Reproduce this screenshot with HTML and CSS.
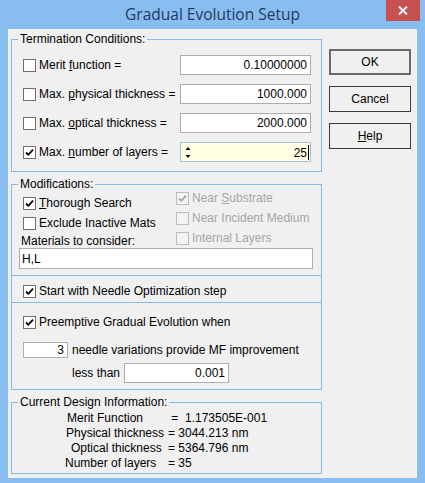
FILE: index.html
```html
<!DOCTYPE html>
<html>
<head>
<meta charset="utf-8">
<link rel="stylesheet" href="styles.css">
</head>
<body>
<div class="window">
  <div class="titlebar">
    <span class="title">Gradual Evolution Setup</span>
    <span class="close"><svg width="10" height="9" viewBox="0 0 10 9"><path d="M1 0.5 L9 8.5 M9 0.5 L1 8.5" stroke="#fff" stroke-width="1.9" fill="none"/></svg></span>
  </div>
  <div class="client">
    <div class="main">
      <div class="group term">
        <div class="legend">Termination Conditions:</div>
        <div class="term-body">
          <div class="check"><span class="cb"></span><span>Merit <u>f</u>unction =</span></div>
          <div class="edit">0.10000000</div>
          <div class="check"><span class="cb"></span><span>Max. <u>p</u>hysical thickness =</span></div>
          <div class="edit">1000.000</div>
          <div class="check"><span class="cb"></span><span>Max. <u>o</u>ptical thickness =</span></div>
          <div class="edit">2000.000</div>
          <div class="check"><span class="cb"><svg width="11" height="11" viewBox="0 0 11 11"><path d="M2 5.5 L4.3 7.8 L9 2.6" stroke="#000" stroke-width="1.8" fill="none"/></svg></span><span>Max. <u>n</u>umber of layers =</span></div>
          <div class="edit focus"><svg class="spin" width="6" height="13" viewBox="0 0 6 13"><path d="M3 1 L5.5 4 L0.5 4 Z M0.5 9 L5.5 9 L3 12 Z" fill="#000"/></svg><span>25<span class="caret"></span></span></div>
        </div>
      </div>

      <div class="group mods">
        <div class="legend">Modifications:</div>
        <div class="mods-top">
          <div class="col-left">
            <div class="check"><span class="cb"><svg width="11" height="11" viewBox="0 0 11 11"><path d="M2 5.5 L4.3 7.8 L9 2.6" stroke="#000" stroke-width="1.8" fill="none"/></svg></span><span><u>T</u>horough Search</span></div>
            <div class="check gap6"><span class="cb"></span><span>Exclude Inactive Mats</span></div>
            <div class="mat-label">Materials to consider:</div>
          </div>
          <div class="col-right">
            <div class="check disabled"><span class="cb"><svg width="11" height="11" viewBox="0 0 11 11"><path d="M2 5.5 L4.3 7.8 L9 2.6" stroke="#a3a3a3" stroke-width="1.8" fill="none"/></svg></span><span>Near <u>S</u>ubstrate</span></div>
            <div class="check disabled gap6"><span class="cb"></span><span>Near Incident Medium</span></div>
            <div class="check disabled gap6"><span class="cb"></span><span>Internal Layers</span></div>
          </div>
        </div>
        <div class="edit materials">H,L</div>
      </div>

      <div class="box needle">
        <div class="check"><span class="cb"><svg width="11" height="11" viewBox="0 0 11 11"><path d="M2 5.5 L4.3 7.8 L9 2.6" stroke="#000" stroke-width="1.8" fill="none"/></svg></span><span>Start with Needle Optimization step</span></div>
      </div>

      <div class="box preempt">
        <div class="check"><span class="cb"><svg width="11" height="11" viewBox="0 0 11 11"><path d="M2 5.5 L4.3 7.8 L9 2.6" stroke="#000" stroke-width="1.8" fill="none"/></svg></span><span>Preemptive Gradual Evolution when</span></div>
        <div class="needle-row"><div class="edit small">3</div><span>needle variations provide MF improvement</span></div>
        <div class="less-row"><span>less than</span><div class="edit less">0.001</div></div>
      </div>

      <div class="group info">
        <div class="legend">Current Design Information:</div>
        <div class="info-body">
          <div class="info-row"><span class="k k1">Merit Function</span><span class="v"> =  1.173505E-001</span></div>
          <div class="info-row"><span class="k k2">Physical thickness</span><span class="v">= 3044.213 nm</span></div>
          <div class="info-row"><span class="k k3">Optical thickness</span><span class="v">= 5364.796 nm</span></div>
          <div class="info-row"><span class="k k4">Number of layers</span><span class="v">= 35</span></div>
        </div>
      </div>
    </div>
    <div class="buttons">
      <div class="btn default">OK</div>
      <div class="btn">Cancel</div>
      <div class="btn"><span><u>H</u>elp</span></div>
    </div>
  </div>
</div>
</body>
</html>
```

FILE: styles.css
```css
* { box-sizing: border-box; }

body {
  margin: 0;
  font-family: "Liberation Sans", Arial, sans-serif;
  font-size: 12px;
  color: #000;
}

.window {
  width: 425px;
  height: 483px;
  background: #88bdf0;
  display: flex;
  flex-direction: column;
}

.titlebar {
  height: 29px;
  flex: none;
  display: grid;
  grid-template-columns: 1fr auto 1fr;
  align-items: start;
}

.title {
  grid-column: 2;
  font-family: "Open Sans", "Noto Sans", sans-serif;
  font-size: 15.5px;
  line-height: 28px;
  color: #1f3b60;
}

.close {
  grid-column: 3;
  justify-self: end;
  width: 34px;
  height: 21px;
  margin-right: 5px;
  background: #c75050;
  display: flex;
  align-items: center;
  justify-content: center;
}

.client {
  flex: 1;
  margin: 0 8px 5px 8px;
  background: #f0f0f0;
  display: flex;
  align-items: flex-start;
  padding: 10px 0 0 3px;
}

.main {
  width: 311px;
  flex: none;
  display: flex;
  flex-direction: column;
}

.main > * { flex: none; }

.buttons {
  margin-left: 7px;
  padding-top: 10px;
  display: flex;
  flex-direction: column;
  gap: 11px;
}

.btn {
  width: 82px;
  height: 26px;
  border: 1px solid #3a3a3a;
  background: #f0f0f0;
  display: flex;
  align-items: center;
  justify-content: center;
}

.btn.default {
  border: 2px solid #6a6a6a;
}

.group {
  border: 1px solid #86b9ec;
}

.legend {
  width: max-content;
  height: 14px;
  line-height: 14px;
  margin: -8px 0 0 6px;
  padding: 0 2px;
  background: #f0f0f0;
}

.term-body {
  display: grid;
  grid-template-columns: 1fr 131px;
  row-gap: 9px;
  padding: 9px 10px 9px 11px;
}

.check {
  display: flex;
  align-items: center;
  gap: 3px;
  white-space: nowrap;
}

.term-body .check { height: 20px; }

.cb {
  width: 13px;
  height: 13px;
  flex: none;
  border: 1px solid #707070;
  background: #fff;
  display: flex;
}

.edit {
  height: 20px;
  border: 1px solid #abadb3;
  background: #fff;
  display: flex;
  align-items: center;
  justify-content: flex-end;
  padding: 0 3px;
  white-space: nowrap;
}

.edit.focus {
  background: #ffffe3;
  border-color: #a4bfdc;
  justify-content: space-between;
  padding-left: 4px;
  padding-right: 1px;
}

.caret {
  display: inline-block;
  width: 1px;
  height: 15px;
  background: #000;
  vertical-align: -3px;
  margin-left: 1px;
}

.mods { margin-top: 12px; }

.mods-top {
  display: flex;
}

.col-left {
  width: 164px;
  padding: 5px 0 0 11px;
  display: flex;
  flex-direction: column;
}

.col-right {
  display: flex;
  flex-direction: column;
}

.mods .check { height: 14px; }

.gap6 { margin-top: 6px; }

.mat-label {
  height: 14px;
  line-height: 14px;
  margin-top: 4px;
  margin-left: -2px;
}

.disabled { color: #a6a6a6; }
.disabled .cb {
  border-color: #bcbcbc;
  background: #f4f4f4;
}

.edit.materials {
  height: 21px;
  margin: 0 8px 6px 7px;
  justify-content: flex-start;
  padding-left: 2px;
}

.box {
  border: 1px solid #86b9ec;
  border-top: none;
}

.needle {
  padding: 8px 0 4px 11px;
}

.box .check { height: 14px; }

.preempt {
  padding: 12px 0 6px 11px;
}

.needle-row {
  margin-top: 13px;
  display: flex;
  align-items: center;
  gap: 4px;
  white-space: nowrap;
}

.edit.small {
  width: 45px;
  height: 16px;
}

.less-row {
  margin-top: 5px;
  padding-left: 49px;
  display: flex;
  align-items: center;
  gap: 4px;
}

.edit.less {
  width: 105px;
  height: 20px;
}

.info { margin-top: 12px; }

.info-body {
  padding: 2px 0 2px 0;
}

.info-row {
  display: flex;
  height: 15px;
  line-height: 15px;
  white-space: pre;
}

.k { width: 156px; flex: none; }
.k1 { padding-left: 55px; }
.k2 { padding-left: 54px; }
.k3 { padding-left: 59px; }
.k4 { padding-left: 53px; }
```
